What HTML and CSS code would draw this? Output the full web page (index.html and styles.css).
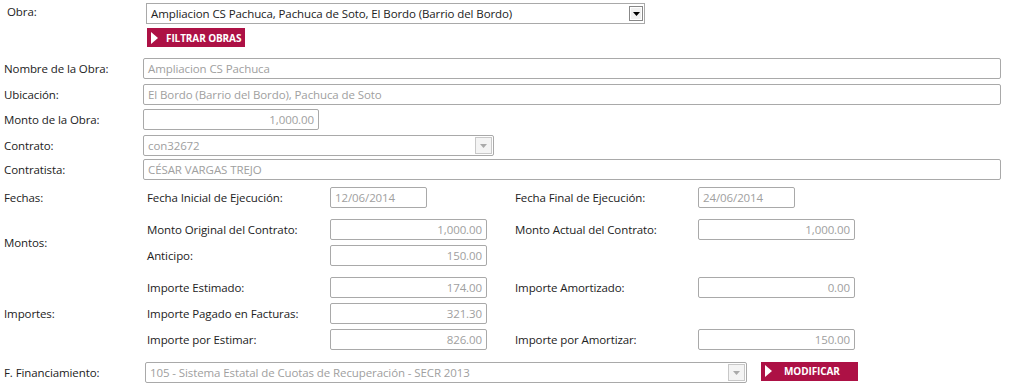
FILE: index.html
```html
<!DOCTYPE html>
<html lang="es">
<head>
<meta charset="utf-8">
<title>Obra</title>
<link rel="stylesheet" href="styles.css">
</head>
<body>
<div class="form">
  <div class="row row-obra">
    <div class="lbl lbl-obra">Obra:</div>
    <div class="col">
      <div class="sel sel-obra">
        <span class="sel-text">Ampliacion CS Pachuca, Pachuca de Soto, El Bordo (Barrio del Bordo)</span>
        <span class="arrow"><svg width="7" height="4" viewBox="0 0 7 4"><path d="M0 0h7L3.5 4z" fill="#000"/></svg></span>
      </div>
      <div class="btn btn-filtrar"><svg class="tri" width="7" height="12" viewBox="0 0 7 12"><path d="M0 0L7 6L0 12z" fill="#fff"/></svg><span>FILTRAR OBRAS</span></div>
    </div>
  </div>

  <div class="row r1 first">
    <div class="lbl">Nombre de la Obra:</div>
    <div class="inp w-full">Ampliacion CS Pachuca</div>
  </div>
  <div class="row r1 gap5">
    <div class="lbl">Ubicación:</div>
    <div class="inp w-full">El Bordo (Barrio del Bordo), Pachuca de Soto</div>
  </div>
  <div class="row r1">
    <div class="lbl">Monto de la Obra:</div>
    <div class="inp num w-monto">1,000.00</div>
  </div>
  <div class="row r1 gap5">
    <div class="lbl">Contrato:</div>
    <div class="sel dis w-contrato">
      <span class="sel-text">con32672</span>
      <span class="arrow"><svg width="7" height="4" viewBox="0 0 7 4"><path d="M0 0h7L3.5 4z" fill="#aaa"/></svg></span>
    </div>
  </div>
  <div class="row r1 gap3">
    <div class="lbl">Contratista:</div>
    <div class="inp w-full">CÉSAR VARGAS TREJO</div>
  </div>

  <div class="row sec sec-fechas">
    <div class="lbl">Fechas:</div>
    <div class="sub">
      <div class="subrow">
        <div class="slbl">Fecha Inicial de Ejecución:</div>
        <div class="cell"><div class="inp w-date">12/06/2014</div></div>
        <div class="slbl slbl2">Fecha Final de Ejecución:</div>
        <div class="cell"><div class="inp w-date">24/06/2014</div></div>
      </div>
    </div>
  </div>

  <div class="row sec sec-montos">
    <div class="lbl">Montos:</div>
    <div class="sub">
      <div class="subrow">
        <div class="slbl">Monto Original del Contrato:</div>
        <div class="cell"><div class="inp num w-amt">1,000.00</div></div>
        <div class="slbl slbl2">Monto Actual del Contrato:</div>
        <div class="cell"><div class="inp num w-amt">1,000.00</div></div>
      </div>
      <div class="subrow">
        <div class="slbl">Anticipo:</div>
        <div class="cell"><div class="inp num w-amt">150.00</div></div>
      </div>
    </div>
  </div>

  <div class="row sec sec-importes">
    <div class="lbl">Importes:</div>
    <div class="sub">
      <div class="subrow">
        <div class="slbl">Importe Estimado:</div>
        <div class="cell"><div class="inp num w-amt">174.00</div></div>
        <div class="slbl slbl2">Importe Amortizado:</div>
        <div class="cell"><div class="inp num w-amt">0.00</div></div>
      </div>
      <div class="subrow">
        <div class="slbl">Importe Pagado en Facturas:</div>
        <div class="cell"><div class="inp num w-amt">321.30</div></div>
      </div>
      <div class="subrow">
        <div class="slbl">Importe por Estimar:</div>
        <div class="cell"><div class="inp num w-amt">826.00</div></div>
        <div class="slbl slbl2">Importe por Amortizar:</div>
        <div class="cell"><div class="inp num w-amt">150.00</div></div>
      </div>
    </div>
  </div>

  <div class="row sec-fin">
    <div class="lbl">F. Financiamiento:</div>
    <div class="sel dis w-fin">
      <span class="sel-text">105 - Sistema Estatal de Cuotas de Recuperación - SECR 2013</span>
      <span class="arrow"><svg width="7" height="4" viewBox="0 0 7 4"><path d="M0 0h7L3.5 4z" fill="#aaa"/></svg></span>
    </div>
    <div class="btn btn-mod"><svg class="tri" width="7" height="12" viewBox="0 0 7 12"><path d="M0 0L7 6L0 12z" fill="#fff"/></svg><span>MODIFICAR</span></div>
  </div>
</div>
</body>
</html>
```
FILE: styles.css
```css
html, body {
  margin: 0;
  padding: 0;
  background: #fff;
}
body {
  font-family: "Open Sans", "Noto Sans", "DejaVu Sans", sans-serif;
  font-size: 11.5px;
  color: #222;
}
.form {
  padding: 3px 0 0 4px;
}
.row {
  display: flex;
  align-items: center;
}
.lbl {
  width: 139px;
  flex: none;
  white-space: nowrap;
  letter-spacing: -0.1px;
}
.lbl-obra {
  padding-left: 3px;
  width: 138px;
  align-self: flex-start;
  line-height: 18px;
}
.row-obra .col {
  display: flex;
  flex-direction: column;
  align-items: flex-start;
}
.inp, .sel {
  box-sizing: border-box;
  height: 21px;
  border: 1px solid #a9a9a9;
  border-radius: 2px;
  padding: 0 4px;
  line-height: 19px;
  color: #a0a0a0;
  white-space: nowrap;
  overflow: hidden;
  background: #fff;
  letter-spacing: -0.1px;
}
.num { text-align: right; }
.w-full { width: 858px; }
.w-monto { width: 176px; }
.w-contrato { width: 351px; }
.w-date { width: 97px; }
.w-amt { width: 157px; }
.w-fin { width: 602px; }
.r1 { margin-top: 4px; }
.r1.gap5 { margin-top: 5px; }
.r1.gap3 { margin-top: 3px; }
.r1.first { margin-top: 0; }
.sel {
  display: flex;
  align-items: center;
  justify-content: space-between;
  padding-right: 1px;
}
.sel-obra {
  width: 499px;
  height: 21px;
  color: #222;
  border-radius: 0;
  margin-left: 1px;
  padding-left: 4px;
  padding-right: 1px;
}
.sel-obra .arrow {
  width: 12px;
  height: 13px;
  border: 1px solid #888;
  background: #f0f0f0;
  box-shadow: inset 0 0 0 1px #fff;
}
.sel .arrow {
  flex: none;
  display: flex;
  align-items: center;
  justify-content: center;
  box-sizing: content-box;
}
.sel.dis .arrow {
  width: 15px;
  height: 15px;
  border: 1px solid #c8c8c8;
  background: #f4f4f4;
}
.btn {
  display: flex;
  align-items: center;
  box-sizing: border-box;
  height: 19px;
  background: #ad1145;
  color: #fff;
  font-weight: bold;
  font-size: 10px;
  letter-spacing: -0.1px;
  padding-left: 4px;
}
.btn .tri { flex: none; }
.btn-filtrar {
  width: 98px;
  margin-top: 4px;
  margin-left: 2px;
}
.btn-filtrar .tri { margin-right: 8px; }
.row-obra { margin-bottom: 11px; }
.sub {
  display: flex;
  flex-direction: column;
  gap: 5px;
}
.subrow {
  display: grid;
  grid-template-columns: 187px 157px 211px 157px;
  align-items: center;
}
.slbl {
  padding-left: 4px;
  white-space: nowrap;
  letter-spacing: -0.1px;
}
.slbl2 {
  padding-left: 28px;
}
.cell { display: flex; }
.sec-fechas { margin-top: 7px; }
.sec-montos { margin-top: 11px; }
.sec-importes { margin-top: 11px; }
.sec-fin { margin-top: 12px; }
.sec-fin .sel { margin-left: 2px; }
.btn-mod {
  width: 97px;
  margin-left: 14px;
  margin-top: -3px;
}
.btn-mod .tri { margin-right: 12px; }
```
